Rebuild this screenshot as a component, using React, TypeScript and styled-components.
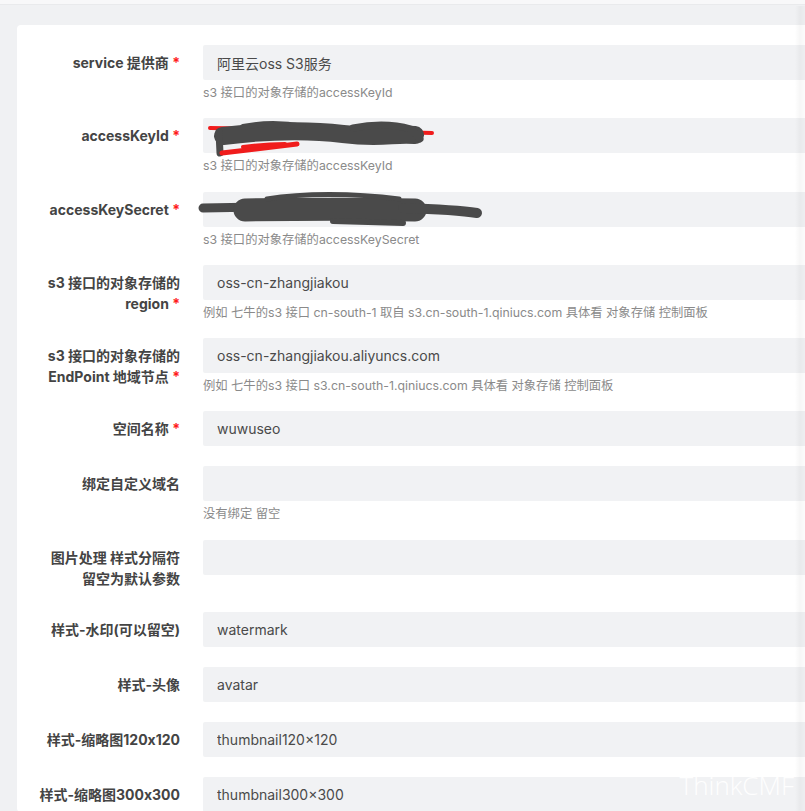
import React from 'react'
import styled, { createGlobalStyle } from 'styled-components'

interface FieldProps {
  label: string[]
  required?: boolean
  value?: string
  help?: string
  scribble?: 'key' | 'secret'
}

const fields: FieldProps[] = [
  { label: ['service 提供商'], required: true, value: '阿里云oss S3服务', help: 's3 接口的对象存储的accessKeyId' },
  { label: ['accessKeyId'], required: true, help: 's3 接口的对象存储的accessKeyId', scribble: 'key' },
  { label: ['accessKeySecret'], required: true, help: 's3 接口的对象存储的accessKeySecret', scribble: 'secret' },
  {
    label: ['s3 接口的对象存储的', 'region'],
    required: true,
    value: 'oss-cn-zhangjiakou',
    help: '例如 七牛的s3 接口 cn-south-1 取自 s3.cn-south-1.qiniucs.com 具体看 对象存储 控制面板',
  },
  {
    label: ['s3 接口的对象存储的', 'EndPoint 地域节点'],
    required: true,
    value: 'oss-cn-zhangjiakou.aliyuncs.com',
    help: '例如 七牛的s3 接口 s3.cn-south-1.qiniucs.com 具体看 对象存储 控制面板',
  },
  { label: ['空间名称'], required: true, value: 'wuwuseo' },
  { label: ['绑定自定义域名'], help: '没有绑定 留空' },
  { label: ['图片处理 样式分隔符', '留空为默认参数'] },
  { label: ['样式-水印(可以留空)'], value: 'watermark' },
  { label: ['样式-头像'], value: 'avatar' },
  { label: ['样式-缩略图120x120'], value: 'thumbnail120×120' },
  { label: ['样式-缩略图300x300'], value: 'thumbnail300×300' },
]

// redaction marks drawn over the secret inputs
const Scribble = ({ kind }: { kind: 'key' | 'secret' }) => {
  if (kind === 'key') {
    return (
      <ScribbleSvg width="240" height="40" viewBox="0 0 240 40">
        <path d="M7 10 C80 11 160 13 229 15" stroke="#f01c1c" strokeWidth="4" strokeLinecap="round" fill="none" />
        <path d="M20 18 C60 13 100 11 140 16 S190 15 212 17" stroke="#4a4a4a" strokeWidth="18" strokeLinecap="round" fill="none" />
        <path d="M40 9 C60 5 80 5 100 9" stroke="#4a4a4a" strokeWidth="6" strokeLinecap="round" fill="none" />
        <path d="M150 10 C170 6 190 6 208 11 L217 21" stroke="#4a4a4a" strokeWidth="7" strokeLinecap="round" fill="none" />
        <path d="M16 14 L17 35" stroke="#4a4a4a" strokeWidth="7" strokeLinecap="round" fill="none" />
        <path d="M19 35 C45 32 70 29 94 26" stroke="#f01c1c" strokeWidth="5" strokeLinecap="round" fill="none" />
        <path d="M40 29 C55 27 70 26 82 26" stroke="#f01c1c" strokeWidth="4" strokeLinecap="round" fill="none" />
      </ScribbleSvg>
    )
  }
  return (
    <ScribbleSvg width="280" height="40" viewBox="0 0 280 40">
      <path d="M0 16 C40 15 80 14 120 15" stroke="#4a4a4a" strokeWidth="9" strokeLinecap="round" fill="none" />
      <path d="M42 18 C100 17 160 17 212 18" stroke="#4a4a4a" strokeWidth="23" strokeLinecap="round" fill="none" />
      <path d="M64 7 C100 1 150 1 196 7" stroke="#4a4a4a" strokeWidth="5" strokeLinecap="round" fill="none" />
      <path d="M200 16 C230 17 255 18 274 21" stroke="#4a4a4a" strokeWidth="10" strokeLinecap="round" fill="none" />
      <path d="M130 29 L200 31" stroke="#4a4a4a" strokeWidth="6" strokeLinecap="round" fill="none" />
    </ScribbleSvg>
  )
}

const Field = ({ label, required, value, help, scribble }: FieldProps) => {
  return (
    <Row>
      <Label>
        {label.map((line, i) => (
          <LabelLine key={i}>
            {line}
            {required && i === label.length - 1 && <Star> *</Star>}
          </LabelLine>
        ))}
      </Label>
      <Control>
        <InputBox>
          <Input defaultValue={value ?? ''} />
          {scribble && <Scribble kind={scribble} />}
        </InputBox>
        {help && <Help>{help}</Help>}
      </Control>
    </Row>
  )
}

export default function App() {
  return (
    <>
      <GlobalStyle />
      <Page>
        <TopBar />
        <Content>
          <Card>
            {fields.map((f, i) => (
              <Field key={i} {...f} />
            ))}
          </Card>
        </Content>
        <EdgeShade />
        <Watermark>ThinkCMF</Watermark>
      </Page>
    </>
  )
}

const GlobalStyle = createGlobalStyle`
  html, body {
    margin: 0;
    padding: 0;
    overflow: hidden;
    background: #f0f1f3;
  }
  * {
    box-sizing: border-box;
  }
`

const Page = styled.div`
  width: 805px;
  height: 811px;
  overflow: hidden;
  background: #f0f1f3;
  font-family: Inter, 'Noto Sans CJK SC', sans-serif;
  position: relative;
`

const TopBar = styled.div`
  height: 5px;
  background: #f8f8f9;
  border-bottom: 1px solid #e9eaec;
`

const Content = styled.div`
  padding: 20px 0 0 17px;
`

const Card = styled.div`
  width: 820px;
  background: #fff;
  border-radius: 4px;
  padding-top: 20px;
`

const Row = styled.div`
  display: flex;
  align-items: flex-start;
  gap: 23px;
  margin-bottom: 20px;
`

const Label = styled.div`
  width: 163px;
  flex-shrink: 0;
  padding: 7px 0 3px;
  text-align: right;
  font-size: 14px;
  line-height: 21px;
  font-weight: 700;
  color: #444;
`

const LabelLine = styled.div`
  white-space: nowrap;
`

const Star = styled.span`
  color: #ff1a1a;
`

const Control = styled.div`
  flex: 1;
`

const InputBox = styled.div`
  position: relative;
`

const Input = styled.input`
  display: block;
  width: 100%;
  height: 35px;
  border: none;
  outline: none;
  border-radius: 2px;
  background: #f1f2f4;
  padding: 0 14px;
  font-family: Inter, 'Noto Sans CJK SC', sans-serif;
  font-size: 14px;
  color: #4a4a4a;
`

const ScribbleSvg = styled.svg`
  position: absolute;
  left: 0;
  top: 0;
  overflow: visible;
  pointer-events: none;
`

const Help = styled.div`
  margin-top: 7px;
  font-size: 12.3px;
  line-height: 11.3px;
  color: #8a8a8a;
  white-space: nowrap;
`

const EdgeShade = styled.div`
  position: absolute;
  top: 6px;
  right: 0;
  width: 10px;
  bottom: 0;
  background: linear-gradient(to right, rgba(0, 0, 0, 0) 0%, rgba(0, 0, 0, 0.035) 50%, rgba(0, 0, 0, 0.015) 100%);
`

const Watermark = styled.div`
  position: absolute;
  right: 11px;
  bottom: 13px;
  font-family: 'Open Sans', sans-serif;
  font-weight: 300;
  font-size: 26px;
  line-height: 1;
  color: rgba(255, 255, 255, 0.95);
`
